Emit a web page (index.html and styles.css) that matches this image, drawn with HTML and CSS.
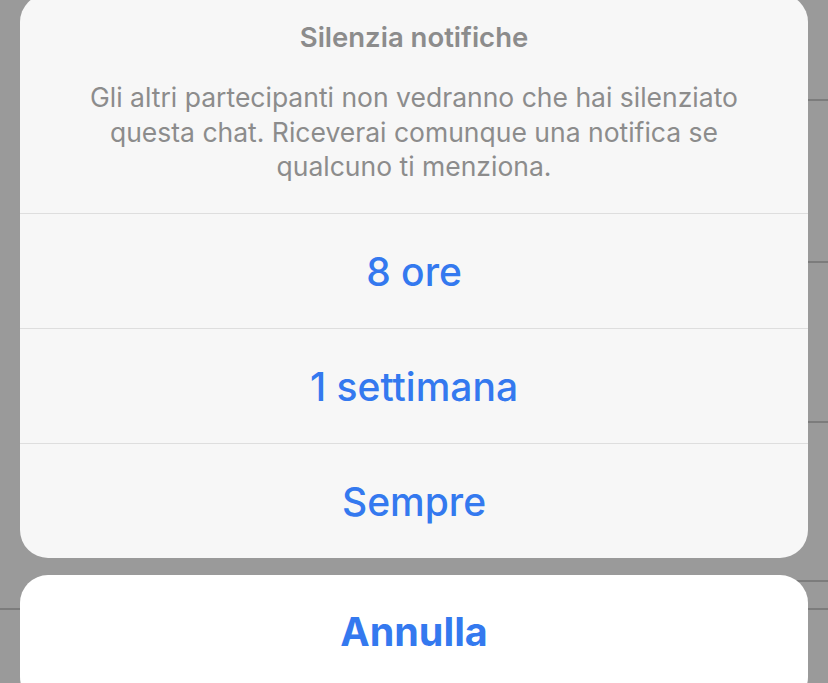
FILE: index.html
```html
<!DOCTYPE html>
<html lang="it">
<head>
    <meta charset="UTF-8">
    <meta name="viewport" content="width=device-width, initial-scale=1.0">
    <title>Silenzia notifiche</title>
    <link rel="stylesheet" href="styles.css">
</head>
<body>
    <div class="backdrop">
        <div class="list-row" style="height: 101px"></div>
        <div class="list-row" style="height: 162px"></div>
        <div class="list-row" style="height: 160px"></div>
        <div class="list-row" style="height: 159px"></div>
        <div class="list-row full" style="height: 28px"></div>
    </div>

    <div class="overlay">
        <div class="sheet">
            <div class="sheet-header">
                <div class="sheet-title">Silenzia notifiche</div>
                <div class="sheet-message">Gli altri partecipanti non vedranno che hai silenziato questa chat. Riceverai comunque una notifica se qualcuno ti menziona.</div>
            </div>
            <button class="sheet-option">8 ore</button>
            <button class="sheet-option">1 settimana</button>
            <button class="sheet-option">Sempre</button>
        </div>
        <button class="sheet-cancel">Annulla</button>
    </div>
</body>
</html>
```

FILE: styles.css
```css
body {
    margin: 0;
    height: 683px;
    overflow: hidden;
    background: #9a9a9a;
    font-family: Inter, "Liberation Sans", sans-serif;
    position: relative;
}
.backdrop {
    display: flex;
    flex-direction: column;
}
.list-row {
    border-bottom: 2px solid #7c7c7c;
    margin-left: 120px;
    box-sizing: border-box;
}
.list-row.full {
    margin-left: 0;
}
.overlay {
    position: absolute;
    top: -6px;
    left: 20px;
    right: 20px;
    display: flex;
    flex-direction: column;
    gap: 17px;
}
.sheet {
    background: #f7f7f7;
    border-radius: 28px;
    overflow: hidden;
    display: flex;
    flex-direction: column;
}
.sheet-header {
    height: 219px;
    box-sizing: border-box;
    padding: 25px 50px 0;
    text-align: center;
    color: #8c8c8c;
}
.sheet-title {
    font-size: 27.5px;
    font-weight: 600;
    line-height: 36px;
}
.sheet-message {
    margin-top: 25px;
    font-size: 26.5px;
    line-height: 34.5px;
}
button {
    font-family: inherit;
    border: none;
    cursor: pointer;
}
.sheet-option {
    height: 115px;
    background: none;
    border-top: 1px solid #dedede;
    color: #3479ef;
    font-size: 39px;
    font-weight: 500;
}
.sheet-cancel {
    height: 130px;
    padding-bottom: 18px;
    background: #fff;
    border-radius: 28px;
    color: #3479ef;
    font-size: 39.5px;
    font-weight: 700;
}
```
